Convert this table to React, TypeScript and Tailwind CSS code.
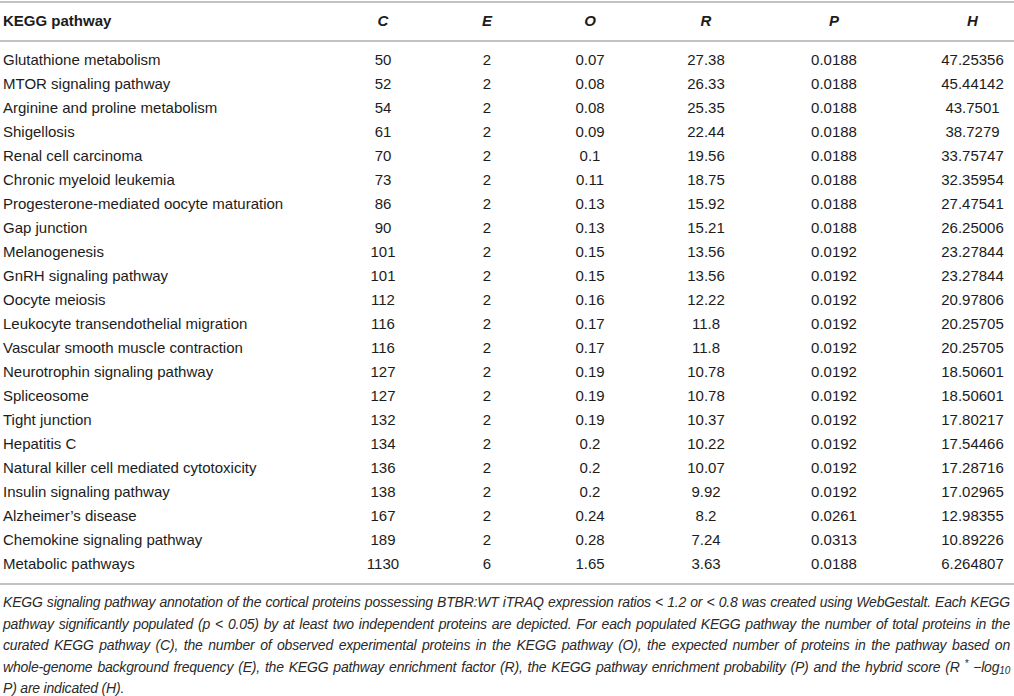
const rows: [string, string, string, string, string, string, string][] = [
  ["Glutathione metabolism", "50", "2", "0.07", "27.38", "0.0188", "47.25356"],
  ["MTOR signaling pathway", "52", "2", "0.08", "26.33", "0.0188", "45.44142"],
  ["Arginine and proline metabolism", "54", "2", "0.08", "25.35", "0.0188", "43.7501"],
  ["Shigellosis", "61", "2", "0.09", "22.44", "0.0188", "38.7279"],
  ["Renal cell carcinoma", "70", "2", "0.1", "19.56", "0.0188", "33.75747"],
  ["Chronic myeloid leukemia", "73", "2", "0.11", "18.75", "0.0188", "32.35954"],
  ["Progesterone-mediated oocyte maturation", "86", "2", "0.13", "15.92", "0.0188", "27.47541"],
  ["Gap junction", "90", "2", "0.13", "15.21", "0.0188", "26.25006"],
  ["Melanogenesis", "101", "2", "0.15", "13.56", "0.0192", "23.27844"],
  ["GnRH signaling pathway", "101", "2", "0.15", "13.56", "0.0192", "23.27844"],
  ["Oocyte meiosis", "112", "2", "0.16", "12.22", "0.0192", "20.97806"],
  ["Leukocyte transendothelial migration", "116", "2", "0.17", "11.8", "0.0192", "20.25705"],
  ["Vascular smooth muscle contraction", "116", "2", "0.17", "11.8", "0.0192", "20.25705"],
  ["Neurotrophin signaling pathway", "127", "2", "0.19", "10.78", "0.0192", "18.50601"],
  ["Spliceosome", "127", "2", "0.19", "10.78", "0.0192", "18.50601"],
  ["Tight junction", "132", "2", "0.19", "10.37", "0.0192", "17.80217"],
  ["Hepatitis C", "134", "2", "0.2", "10.22", "0.0192", "17.54466"],
  ["Natural killer cell mediated cytotoxicity", "136", "2", "0.2", "10.07", "0.0192", "17.28716"],
  ["Insulin signaling pathway", "138", "2", "0.2", "9.92", "0.0192", "17.02965"],
  ["Alzheimer\u2019s disease", "167", "2", "0.24", "8.2", "0.0261", "12.98355"],
  ["Chemokine signaling pathway", "189", "2", "0.28", "7.24", "0.0313", "10.89226"],
  ["Metabolic pathways", "1130", "6", "1.65", "3.63", "0.0188", "6.264807"],
];

const cols = ["w-[104px]", "w-[104px]", "w-[102px]", "w-[130px]", "w-[126px]", "w-[117px] pl-[34px]"];
const heads = ["C", "E", "O", "R", "P", "H"];

const Row = ({ cells, head }: { cells: string[]; head?: boolean }) => (
  <div className={`flex items-center ${head ? "h-[37px]" : "h-[24px]"}`}>
    <div className={`w-[331px] pl-[3px] ${head ? "font-bold" : ""}`}>{cells[0]}</div>
    {cells.slice(1).map((c, i) => (
      <div key={i} className={`${cols[i]} shrink-0 text-center ${head ? "font-bold italic" : ""}`}>
        {c}
      </div>
    ))}
  </div>
);

const Line = ({ children, last }: { children: React.ReactNode; last?: boolean }) => (
  <div className={`whitespace-nowrap ${last ? "" : "text-justify [text-align-last:justify]"}`}>{children}</div>
);

export default function App() {
  return (
    <div className="w-[1014px] h-[696px] bg-white text-[#1c1c1c] font-['Liberation_Sans',Arial,sans-serif] overflow-hidden pt-[1px]">
      <div className="h-[2px] bg-[#c2c2c2]" />
      <div className="text-[15px]">
        <Row head cells={["KEGG pathway", ...heads]} />
      </div>
      <div className="h-[2px] bg-[#c2c2c2]" />
      <div className="text-[15px] pt-[6px] pb-[7px]">
        {rows.map((r) => (
          <Row key={r[0]} cells={r} />
        ))}
      </div>
      <div className="h-[2px] bg-[#c2c2c2]" />
      <div className="pt-[7px] pl-[3px] pr-[4px] text-[14px] tracking-[-0.2px] italic leading-[21.6px] text-[#2a2a2a]">
        <Line>
          KEGG signaling pathway annotation of the cortical proteins possessing BTBR:WT iTRAQ expression ratios &lt; 1.2 or &lt; 0.8 was created using WebGestalt. Each KEGG
        </Line>
        <Line>
          pathway significantly populated (p &lt; 0.05) by at least two independent proteins are depicted. For each populated KEGG pathway the number of total proteins in the
        </Line>
        <Line>
          curated KEGG pathway (C), the number of observed experimental proteins in the KEGG pathway (O), the expected number of proteins in the pathway based on
        </Line>
        <Line>
          whole-genome background frequency (E), the KEGG pathway enrichment factor (R), the KEGG pathway enrichment probability (P) and the hybrid score (R{" "}
          <sup className="text-[10px]">*</sup> −log<sub className="text-[10px]">10</sub>
        </Line>
        <Line last>P) are indicated (H).</Line>
      </div>
    </div>
  );
}
